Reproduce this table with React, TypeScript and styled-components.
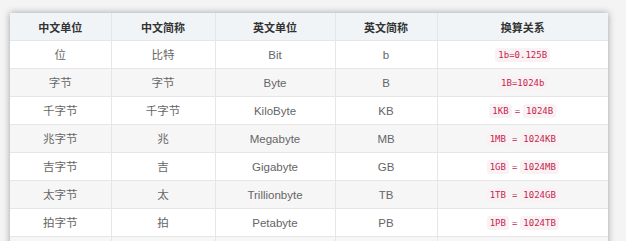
import styled, { createGlobalStyle } from 'styled-components';

const GlobalStyle = createGlobalStyle`
  html, body {
    margin: 0;
    padding: 0;
    background: #f4f4f4;
    overflow: hidden;
  }
`;

const Page = styled.div`
  padding: 13px 18px 0 10px;
  font-family: 'Liberation Sans', Arial, 'Noto Sans CJK SC', sans-serif;
`;

const Table = styled.table`
  width: 598px;
  border-collapse: collapse;
  table-layout: fixed;
  background: #fff;
  box-shadow: 0 0 7px rgba(0, 0, 0, 0.35);
`;

const Th = styled.th`
  height: 27px;
  padding: 0;
  background: #f1f4f7;
  color: #333;
  font-size: 11px;
  font-weight: 700;
  text-align: center;
  border-left: 1px solid #e4e7ea;
  border-bottom: 1px solid #e4e7ea;
  &:first-child { border-left: 0; }
`;

const Row = styled.tr<{ $striped: boolean }>`
  height: 28px;
  background: ${p => (p.$striped ? '#f6f6f6' : '#fff')};
`;

const Td = styled.td`
  padding: 0;
  line-height: 14px;
  color: #666;
  font-size: 11.5px;
  text-align: center;
  border-left: 1px solid #e6e6e6;
  border-bottom: 1px solid #e6e6e6;
  &:first-child { border-left: 0; }
`;

const Code = styled.code`
  font-family: 'DejaVu Sans Mono', 'Liberation Mono', monospace;
  font-size: 9px;
  color: #c7254e;
  background: #f9f2f4;
  padding: 2px 3px;
  border-radius: 3px;
`;

const Eq = styled.span`
  color: #c7254e;
  font-family: 'DejaVu Sans Mono', monospace;
  font-size: 9px;
  margin: 0 3px;
`;

const cols = [101, 104, 120, 102, 171];
const heads = ['中文单位', '中文简称', '英文单位', '英文简称', '换算关系'];

type Unit = { cn: string; short: string; en: string; abbr: string; rel: string[] };

const units: Unit[] = [
  { cn: '位', short: '比特', en: 'Bit', abbr: 'b', rel: ['1b=0.125B'] },
  { cn: '字节', short: '字节', en: 'Byte', abbr: 'B', rel: ['1B=1024b'] },
  { cn: '千字节', short: '千字节', en: 'KiloByte', abbr: 'KB', rel: ['1KB', '1024B'] },
  { cn: '兆字节', short: '兆', en: 'Megabyte', abbr: 'MB', rel: ['1MB', '1024KB'] },
  { cn: '吉字节', short: '吉', en: 'Gigabyte', abbr: 'GB', rel: ['1GB', '1024MB'] },
  { cn: '太字节', short: '太', en: 'Trillionbyte', abbr: 'TB', rel: ['1TB', '1024GB'] },
  { cn: '拍字节', short: '拍', en: 'Petabyte', abbr: 'PB', rel: ['1PB', '1024TB'] },
];

export default function App() {
  return (
    <>
      <GlobalStyle />
      <Page>
        <Table>
          <colgroup>
            {cols.map((w, i) => <col key={i} style={{ width: w }} />)}
          </colgroup>
          <thead>
            <tr>
              {heads.map(h => <Th key={h}>{h}</Th>)}
            </tr>
          </thead>
          <tbody>
            {units.map((u, i) => (
              <Row key={u.abbr} $striped={i % 2 === 1}>
                <Td>{u.cn}</Td>
                <Td>{u.short}</Td>
                <Td>{u.en}</Td>
                <Td>{u.abbr}</Td>
                <Td>
                  {u.rel.length === 1 ? (
                    <Code>{u.rel[0]}</Code>
                  ) : (
                    <>
                      <Code>{u.rel[0]}</Code>
                      <Eq>=</Eq>
                      <Code>{u.rel[1]}</Code>
                    </>
                  )}
                </Td>
              </Row>
            ))}
            {/* next row is cut off by the frame */}
            <Row $striped>
              {cols.map((_, i) => <Td key={i} />)}
            </Row>
          </tbody>
        </Table>
      </Page>
    </>
  );
}
